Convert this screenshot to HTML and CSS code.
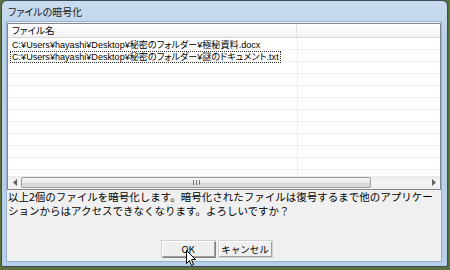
FILE: index.html
```html
<!DOCTYPE html>
<html lang="ja">
<head>
    <meta charset="UTF-8">
    <title>ファイルの暗号化</title>
    <link rel="stylesheet" href="styles.css">
</head>
<body>
    <div class="window">
        <div class="titlebar">ファイルの暗号化</div>
        <div class="client">
            <div class="listview">
                <div class="lv-header">
                    <div class="lv-col first">ファイル名</div>
                    <div class="lv-col"></div>
                </div>
                <div class="lv-body">
                    <div class="lv-row"><span class="lv-text">C:¥Users¥hayashi¥Desktop¥秘密のフォルダー¥極秘資料.docx</span></div>
                    <div class="lv-row"><span class="lv-text focused">C:¥Users¥hayashi¥Desktop¥秘密のフォルダー¥謎のドキュメント.txt</span></div>
                </div>
                <div class="hscroll">
                    <div class="sb-arrow">
                        <svg width="4" height="7" viewBox="0 0 4 7"><path d="M4 0 L0 3.5 L4 7 Z" fill="#606060"/></svg>
                    </div>
                    <div class="sb-track">
                        <div class="sb-thumb"><span class="grip"></span></div>
                    </div>
                    <div class="sb-arrow">
                        <svg width="4" height="7" viewBox="0 0 4 7"><path d="M0 0 L4 3.5 L0 7 Z" fill="#606060"/></svg>
                    </div>
                </div>
            </div>
            <p class="message">以上2個のファイルを暗号化します。暗号化されたファイルは復号するまで他のアプリケーションからはアクセスできなくなります。よろしいですか？</p>
            <div class="buttons">
                <button class="btn default">OK</button>
                <button class="btn">キャンセル</button>
            </div>
        </div>
    </div>

    <!-- mouse pointer over the OK button -->
    <svg class="cursor" width="11" height="17" viewBox="0 0 11 17">
        <path d="M0.5 0.5 L0.5 13.5 L3.5 10.5 L5.5 15.5 L7.5 14.5 L5.5 9.5 L9.5 9.5 Z" fill="#fff" stroke="#000" stroke-width="1" stroke-linejoin="miter"/>
    </svg>
</body>
</html>
```

FILE: styles.css
```css
* {
    box-sizing: border-box;
}
body {
    margin: 0;
    width: 450px;
    height: 270px;
    overflow: hidden;
    position: relative;
    background-color: #5e6f3e;
    font-family: "Liberation Sans", "Noto Sans CJK JP", sans-serif;
    font-feature-settings: "palt";
    color: #000;
}
.window {
    margin-left: 1px;
    width: 447px;
    height: 267px;
    border: 1px solid #3b4a5c;
    border-radius: 6px 6px 2px 2px;
    background: linear-gradient(#cadcf0, #b9d0ea 40px, #b7cfe9);
    padding: 0 6px 5px 5px;
    display: flex;
    flex-direction: column;
}
.titlebar {
    height: 21px;
    flex: none;
    font-family: "Noto Sans CJK JP", sans-serif;
    font-size: 10px;
    line-height: 22px;
    padding-left: 1px;
    color: #1a1a1a;
}
.client {
    flex: 1;
    background-color: #f0f0f0;
    box-shadow: 0 0 0 1px rgba(90, 120, 160, 0.35);
    display: flex;
    flex-direction: column;
}
.listview {
    margin-top: 1px;
    height: 167px;
    flex: none;
    border: 1px solid #828790;
    background-color: #fff;
    display: flex;
    flex-direction: column;
}
.lv-header {
    height: 14px;
    flex: none;
    display: flex;
    background: linear-gradient(#ffffff, #f2f3f5);
    border-bottom: 1px solid #d5d5d5;
}
.lv-col {
    flex: 1;
    font-size: 9.5px;
    line-height: 13px;
    padding-left: 4px;
}
.lv-col.first {
    flex: none;
    width: 289px;
    border-right: 1px solid #e3e3e3;
}
.lv-body {
    flex: 1;
    padding-top: 1px;
    background:
        linear-gradient(to right, transparent 289px, #eeeeee 289px, #eeeeee 290px, transparent 290px),
        repeating-linear-gradient(to bottom, transparent 0, transparent 11px, #f0f0f0 11px, #f0f0f0 12px);
}
.lv-row {
    height: 12px;
    padding-left: 2px;
    font-size: 9.1px;
    line-height: 10px;
}
.lv-text {
    display: inline-block;
    padding: 0 1px;
    border: 1px solid transparent;
    white-space: nowrap;
}
.lv-text.focused {
    border: 1px dotted #333;
}
.hscroll {
    height: 13px;
    flex: none;
    display: flex;
    background: linear-gradient(#e9e9e9, #f4f4f4 40%, #f0f0f0);
}
.sb-arrow {
    width: 13px;
    flex: none;
    display: flex;
    align-items: center;
    justify-content: center;
}
.sb-track {
    flex: 1;
    padding: 1px 0;
}
.sb-thumb {
    width: 350px;
    height: 100%;
    border: 1px solid #9b9b9b;
    border-radius: 2px;
    background: linear-gradient(#f6f6f6, #e9e9e9 50%, #d6d6d6 51%, #dcdcdc);
    display: flex;
    align-items: center;
    justify-content: center;
}
.grip {
    width: 7px;
    height: 5px;
    background: repeating-linear-gradient(to right, #7a7a7a 0, #7a7a7a 1px, transparent 1px, transparent 3px);
}
.message {
    margin: 0;
    padding: 0 1px;
    font-family: "Noto Sans CJK JP", sans-serif;
    font-feature-settings: normal;
    font-size: 10.5px;
    line-height: 14px;
}
.buttons {
    margin-top: auto;
    padding: 0 15px 4px 0;
    display: flex;
    justify-content: center;
    gap: 4px;
}
.btn {
    width: 53px;
    height: 16px;
    padding: 0;
    font-family: "Noto Sans CJK JP", sans-serif;
    font-size: 9.5px;
    line-height: 14px;
    color: #000;
    background-color: #efefef;
    border: 1px solid;
    border-color: #ffffff #a0a0a0 #a0a0a0 #ffffff;
    box-shadow: 0 0 0 1px #d2d2d2;
}
.btn.default {
    box-shadow: 1px 1px 0 #808080, 0 0 0 1px #d2d2d2;
}
.cursor {
    position: absolute;
    left: 186px;
    top: 250px;
}
```
